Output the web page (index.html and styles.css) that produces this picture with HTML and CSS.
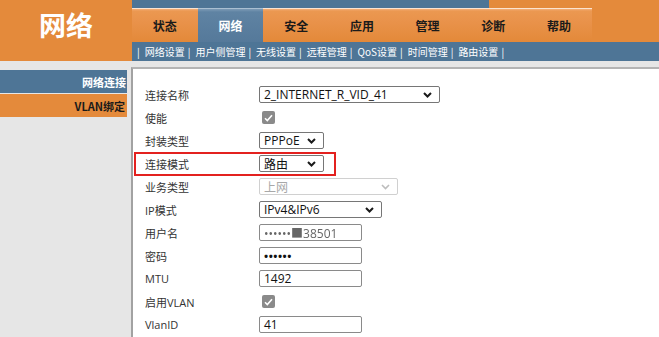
FILE: index.html
```html
<!DOCTYPE html>
<html lang="zh-CN">

<head>
    <meta charset="UTF-8">
    <title>网络</title>
    <link rel="stylesheet" href="styles.css">
</head>

<body>
    <div class="top">
        <div class="logo">网络</div>
        <div class="head">
            <div class="strip"><span class="strip-blue"></span></div>
            <div class="tabs">
                <a class="tab">状态</a>
                <a class="tab active">网络</a>
                <a class="tab">安全</a>
                <a class="tab">应用</a>
                <a class="tab">管理</a>
                <a class="tab">诊断</a>
                <a class="tab">帮助</a>
            </div>
            <div class="subnav">
                <span class="sep">|</span><a>网络设置</a>
                <span class="sep">|</span><a>用户侧管理</a>
                <span class="sep">|</span><a>无线设置</a>
                <span class="sep">|</span><a>远程管理</a>
                <span class="sep">|</span><a>QoS设置</a>
                <span class="sep">|</span><a>时间管理</a>
                <span class="sep">|</span><a>路由设置</a>
                <span class="sep">|</span>
            </div>
        </div>
    </div>

    <div class="main">
        <div class="sidebar">
            <div class="side-item current"><span>网络连接</span></div>
            <div class="side-item">VLAN绑定</div>
        </div>
        <div class="content">
            <div class="form">
                <div class="row">
                    <label>连接名称</label>
                    <div class="select w-name">2_INTERNET_R_VID_41
                        <svg class="chev" width="9" height="6" viewBox="0 0 9 6"><path d="M1 1l3.5 3.5L8 1" fill="none" stroke="#1a1a1a" stroke-width="2"/></svg>
                    </div>
                </div>
                <div class="row">
                    <label>使能</label>
                    <span class="check"><svg width="9" height="8" viewBox="0 0 9 8"><path d="M1 4.2l2.3 2.3L8 1.2" fill="none" stroke="#fff" stroke-width="1.6"/></svg></span>
                </div>
                <div class="row">
                    <label>封装类型</label>
                    <div class="select w-small">PPPoE
                        <svg class="chev" width="9" height="6" viewBox="0 0 9 6"><path d="M1 1l3.5 3.5L8 1" fill="none" stroke="#1a1a1a" stroke-width="2"/></svg>
                    </div>
                </div>
                <div class="row marked">
                    <label>连接模式</label>
                    <div class="select w-small">路由
                        <svg class="chev" width="9" height="6" viewBox="0 0 9 6"><path d="M1 1l3.5 3.5L8 1" fill="none" stroke="#1a1a1a" stroke-width="2"/></svg>
                    </div>
                </div>
                <div class="row">
                    <label>业务类型</label>
                    <div class="select w-mid disabled">上网
                        <svg class="chev" width="9" height="6" viewBox="0 0 9 6"><path d="M1 1l3.5 3.5L8 1" fill="none" stroke="#bdbdbd" stroke-width="1.6"/></svg>
                    </div>
                </div>
                <div class="row">
                    <label>IP模式</label>
                    <div class="select w-ip">IPv4&amp;IPv6
                        <svg class="chev" width="9" height="6" viewBox="0 0 9 6"><path d="M1 1l3.5 3.5L8 1" fill="none" stroke="#1a1a1a" stroke-width="2"/></svg>
                    </div>
                </div>
                <div class="row">
                    <label>用户名</label>
                    <div class="input"><span class="blurred">••••••■38501</span></div>
                </div>
                <div class="row">
                    <label>密码</label>
                    <div class="input pass">••••••</div>
                </div>
                <div class="row">
                    <label>MTU</label>
                    <div class="input">1492</div>
                </div>
                <div class="row">
                    <label>启用VLAN</label>
                    <span class="check"><svg width="9" height="8" viewBox="0 0 9 8"><path d="M1 4.2l2.3 2.3L8 1.2" fill="none" stroke="#fff" stroke-width="1.6"/></svg></span>
                </div>
                <div class="row">
                    <label>VlanID</label>
                    <div class="input">41</div>
                </div>
            </div>
        </div>
    </div>
</body>

</html>
```

FILE: styles.css
```css
body {
    margin: 0;
    width: 659px;
    height: 337px;
    overflow: hidden;
    background-color: #e6e6e6;
    font-family: 'Open Sans', 'Noto Sans CJK SC', sans-serif;
}

/* header */
.top {
    display: flex;
    height: 61px;
}

.logo {
    width: 132px;
    background-color: #e48a3b;
    color: #fff;
    font-family: 'Noto Sans CJK SC', sans-serif;
    font-size: 27px;
    font-weight: bold;
    display: flex;
    align-items: center;
    justify-content: center;
    padding-bottom: 12px;
    box-sizing: border-box;
}

.head {
    flex: 1;
    display: flex;
    flex-direction: column;
    background-color: #e48a3b;
}

.strip {
    height: 8px;
    display: flex;
}

.strip-blue {
    width: 357px;
    background-color: #4e7596;
}

.tabs {
    height: 34px;
    display: flex;
}

.tab {
    width: 65.7px;
    display: flex;
    align-items: center;
    justify-content: center;
    font-family: 'Noto Sans CJK SC', sans-serif;
    font-size: 12px;
    font-weight: bold;
    color: #1a1a1a;
    background: linear-gradient(#f4b07a 0, #eb9851 2px, #e9924a 40%, #e38939 100%);
    border-top: 1px solid #fbe3cf;
    box-sizing: border-box;
}

.tab.active {
    color: #fff;
    background: linear-gradient(#7d9bb6 0, #5f83a3 3px, #55799a 100%);
    border-top-color: #a9bfd2;
}

.subnav {
    height: 19px;
    background-color: #4e7596;
    color: #fff;
    font-family: 'Noto Sans CJK SC', sans-serif;
    font-size: 10px;
    display: flex;
    align-items: center;
    padding-left: 2px;
}

.sep {
    margin: 0 5px 0 3px;
}

/* body */
.main {
    display: flex;
    height: 276px;
}

.sidebar {
    width: 127px;
    margin-right: 4px;
    padding-top: 9px;
}

.side-item {
    height: 23px;
    margin-bottom: 1px;
    display: flex;
    align-items: center;
    justify-content: flex-end;
    padding-right: 2px;
    white-space: nowrap;
    font-family: 'Noto Sans CJK SC', sans-serif;
    font-size: 11px;
    font-weight: bold;
    color: #1a1a1a;
    background-color: #e48a3b;
}

.side-item.current {
    background-color: #4e7596;
    color: #fff;
    padding-right: 1px;
}

.content {
    flex: 1;
    margin-top: 6px;
    background-color: #fff;
    border-top: 2px solid #b4b4b4;
    border-left: 2px solid #a2a2a2;
    padding: 14px 0 0 12px;
}

.row {
    position: relative;
    display: flex;
    align-items: center;
    height: 23px;
}

.row label {
    width: 114px;
    font-size: 11px;
    color: #333;
}

.row.marked::after {
    content: '';
    position: absolute;
    left: -11px;
    top: 0;
    width: 202px;
    height: 24px;
    border: 2px solid #e3211f;
    box-sizing: border-box;
}

.select,
.input {
    position: relative;
    height: 17px;
    box-sizing: border-box;
    border: 1px solid #767676;
    border-radius: 2px;
    background-color: #fff;
    display: flex;
    align-items: center;
    padding-left: 4px;
    font-size: 12px;
    color: #111;
    white-space: nowrap;
}

.chev {
    position: absolute;
    right: 7px;
    top: 5px;
}

.w-name {
    width: 181px;
}

.w-small {
    width: 65px;
}

.w-mid {
    width: 139px;
}

.w-ip {
    width: 123px;
}

.select.disabled {
    border-color: #d0d0d0;
    color: #a8a8a8;
}

.input {
    width: 103px;
    border-color: #8a8a8a;
}

.input.pass {
    font-size: 11px;
    font-weight: bold;
    letter-spacing: 0.5px;
}

.blurred {
    color: #666;
    filter: blur(0.7px);
}

.check {
    width: 13px;
    height: 13px;
    margin-left: 3px;
    border-radius: 2px;
    background-color: #8a8a8a;
    display: flex;
    align-items: center;
    justify-content: center;
}
```
